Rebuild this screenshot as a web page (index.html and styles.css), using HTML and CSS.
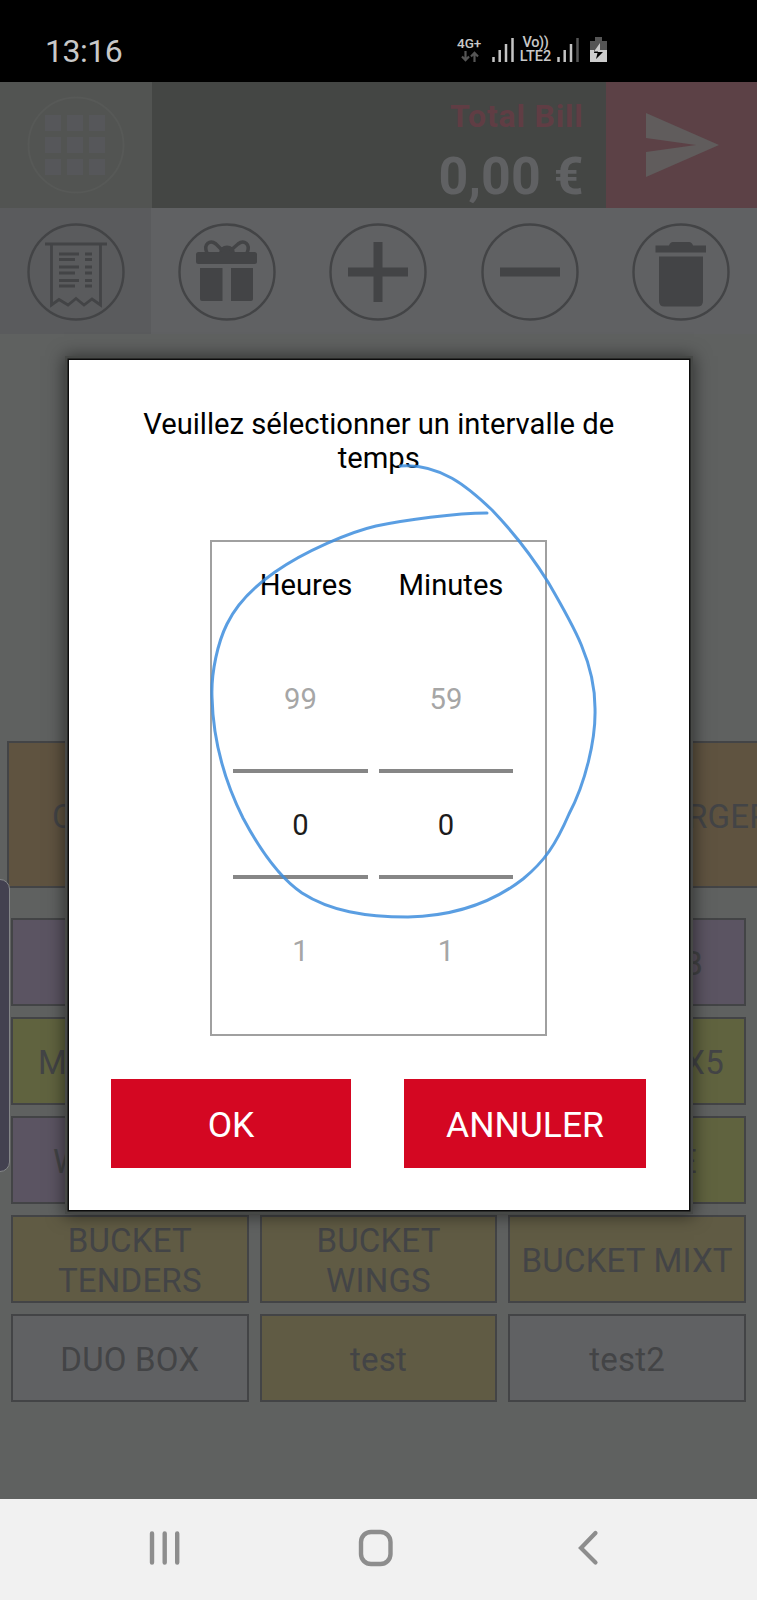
FILE: index.html
```html
<!DOCTYPE html>
<html lang="fr">
<head>
<meta charset="utf-8">
<title>Caisse</title>
<link rel="stylesheet" href="styles.css">
</head>
<body>
<div class="phone">
  <header class="status">
    <span class="clock">13:16</span>
    <div class="status-icons">
      <div class="net"><span>4G+</span>
        <svg width="18" height="11" viewBox="0 0 18 11"><path d="M4.500 0V9M1 5.500L4.500 9.200L8 5.500M13.500 11V2M10 5.500L13.500 1.800L17 5.500" fill="none" stroke="#555" stroke-width="2.200"/></svg>
      </div>
      <svg class="bars" width="23" height="26" viewBox="0 0 23 26"><path d="M1.500 20V25M7.700 13V25M14 7V25M20.500 1V25" stroke="#c4c4c4" stroke-width="2.500"/></svg>
      <div class="volte"><span class="vo">Vo))</span><span>LTE2</span></div>
      <svg class="bars bars-two" width="23" height="26" viewBox="0 0 23 26"><path d="M1.500 20V25M7.700 13V25M14 7V25" stroke="#c4c4c4" stroke-width="2.500"/><path d="M20.500 1V25" stroke="#555" stroke-width="2.500"/></svg>
      <svg class="battery" width="18" height="26" viewBox="0 0 18 26"><path d="M5 0H12V4H17V13H0V4H5Z" fill="#555"/><path d="M0 13H17V25H0Z" fill="#ccc"/><path d="M4.500 13H8V15H13L6 22L7.500 16H4Z" fill="#000"/><path d="M10 6L4 14.500H8.500L10 13H12L10 13Z" fill="#ccc"/></svg>
    </div>
  </header>

  <section class="bill">
    <div class="bill-apps">
      <svg width="98" height="98" viewBox="0 0 98 98"><circle cx="49" cy="49" r="47.500" fill="none" stroke="#575957" stroke-width="2"/><g fill="#56575a"><path d="M18 19h16v16H18zM40 19h16v16H40zM62 19h16v16H62zM18 41h16v16H18zM40 41h16v16H40zM62 41h16v16H62zM18 63h16v16H18zM40 63h16v16H40zM62 63h16v16H62z"/></g></svg>
    </div>
    <div class="bill-total"><span class="bill-label">Total Bill</span><span class="bill-amount">0,00 €</span></div>
    <div class="bill-send">
      <svg width="74" height="64" viewBox="0 0 74 64"><path d="M0 0L73 32L0 64V39L50 32L0 25Z" fill="#605c5c"/></svg>
    </div>
  </section>

  <nav class="tools">
    <div class="tool tool-active"><svg width="98" height="98" viewBox="0 0 98 98"><g fill="none" stroke="#434446"><circle cx="49" cy="49" r="47.500" stroke-width="2.400"/><path d="M18 21H80" stroke-width="3"/><path d="M24.500 21V82L32 76.500L41 82L49 75.500L57 82L65 76L73.500 82V21" stroke-width="2.800"/><path d="M32 31H52M58 31H65M32 36.500H48M58 36.500H65M32 44H52M58 44H65M32 50H48M58 50H65M32 57.500H52M58 57.500H65M32 63H48M58 63H65" stroke-width="3"/></g></svg></div>
    <div class="tool"><svg width="98" height="98" viewBox="0 0 98 98"><circle cx="49" cy="49" r="47.500" fill="none" stroke="#434446" stroke-width="2.400"/><g fill="#434446"><rect x="18" y="29" width="61" height="12" rx="2.500"/><path d="M22 45H44.500V78H24Q22 78 22 76ZM53 45H75V76Q75 78 73 78H53Z"/><path d="M41 30Q42 22.500 49 22.500Q56 22.500 57 30Z"/></g><path d="M29 30C25 21 32 16.500 38 21L45 28M69 30C73 21 66 16.500 60 21L52 28" fill="none" stroke="#434446" stroke-width="3.500"/></svg></div>
    <div class="tool"><svg width="98" height="98" viewBox="0 0 98 98"><circle cx="49" cy="49" r="47.500" fill="none" stroke="#434446" stroke-width="2.400"/><path d="M19 49H79M49 19V79" stroke="#434446" stroke-width="9"/></svg></div>
    <div class="tool"><svg width="98" height="98" viewBox="0 0 98 98"><circle cx="49" cy="49" r="47.500" fill="none" stroke="#434446" stroke-width="2.400"/><path d="M19 49H79" stroke="#434446" stroke-width="9"/></svg></div>
    <div class="tool"><svg width="98" height="98" viewBox="0 0 98 98"><circle cx="49" cy="49" r="47.500" fill="none" stroke="#434446" stroke-width="2.400"/><path d="M23.500 22.500H37Q38 19 41 19H57Q60 19 61 22.500H74V29.500H23.500ZM27 33.500H71V78Q71 83.500 65.500 83.500H32.500Q27 83.500 27 78Z" fill="#434446"/></svg></div>
  </nav>

  <main class="catalog">
    <div class="categories">
      <div class="item orange cat-left">C</div>
      <div class="item orange cat-right">RGER</div>
    </div>
    <div class="products">
      <div class="item purple"></div><div class="item purple"></div><div class="item purple tail-b">B</div>
      <div class="item lime head-m">M</div><div class="item lime"></div><div class="item lime tail-x">X5</div>
      <div class="item purple head-w">W</div><div class="item lime"></div><div class="item lime tail-e">E</div>
      <div class="item khaki">BUCKET<br>TENDERS</div><div class="item khaki">BUCKET<br>WINGS</div><div class="item khaki">BUCKET MIXT</div>
      <div class="item">DUO BOX</div><div class="item khaki">test</div><div class="item">test2</div>
    </div>
  </main>

  <footer class="navbar">
    <svg width="32" height="36" viewBox="0 0 32 36"><path d="M3 3.500V32.500M15.700 3.500V32.500M28.200 3.500V32.500" stroke="#8d8d8d" stroke-width="4.400" stroke-linecap="round"/></svg>
    <svg class="home" width="36" height="38" viewBox="0 0 36 38"><rect x="3" y="3" width="29.500" height="32" rx="10" fill="none" stroke="#8d8d8d" stroke-width="4.400"/></svg>
    <svg width="22" height="38" viewBox="0 0 22 38"><path d="M17.500 4L3 19L17.500 33.500" fill="none" stroke="#8d8d8d" stroke-width="4.200" stroke-linecap="round"/></svg>
  </footer>

  <div class="edge-handle"></div>

  <div class="dialog">
    <h1 class="dialog-title">Veuillez sélectionner un intervalle de temps</h1>
    <div class="picker">
      <div class="wheel"><span class="wheel-name wheel-hours">Heures</span><span class="near">99</span><span class="chosen">0</span><span class="near">1</span></div>
      <div class="wheel"><span class="wheel-name wheel-minutes">Minutes</span><span class="near">59</span><span class="chosen">0</span><span class="near">1</span></div>
    </div>
    <div class="actions"><button class="btn">OK</button><button class="btn btn-cancel">ANNULER</button></div>
  </div>

  <svg class="sketch" width="757" height="1600" viewBox="0 0 757 1600"><path d="M487 513C455 513 405 520 376 526C350 532 305 551 275 572C252 588 236 605 227 624C218 642 211 672 212 697C213 740 224 780 243 818C260 850 280 878 302 893C330 911 365 917 408 917C455 916 492 903 523 879C545 861 556 844 569 814C585 784 596 740 595 708C595 662 573 625 548 582C530 553 515 534 492 510C468 487 440 463 400 466" fill="none" stroke="#3d8ddd" stroke-opacity=".85" stroke-width="3" stroke-linecap="round"/></svg>
</div>
</body>
</html>
```
FILE: styles.css
```css
* { box-sizing: border-box; }
body { margin: 0; font-family: Roboto, "Liberation Sans", sans-serif; }
svg { display: block; flex: none; }
.phone { position: relative; width: 757px; height: 1600px; overflow: hidden; background: #5f6160; display: flex; flex-direction: column; }

.status { height: 82px; flex: none; background: #000; color: #c8c8c8; display: flex; align-items: flex-start; padding: 32px 0 0 45px; }
.clock { font-size: 32px; line-height: 38px; width: 410px; letter-spacing: -0.500px; }
.status-icons { display: flex; align-items: flex-start; padding-top: 5px; }
.net { width: 33px; font-size: 13.500px; font-weight: 500; line-height: 13px; display: flex; flex-direction: column; padding-left: 2px; }
.net svg { margin: 1px 0 0 4px; }
.bars { margin-left: 4px; }
.volte { margin-left: 4px; width: 33px; font-size: 14.500px; font-weight: 500; line-height: 13.500px; display: flex; flex-direction: column; align-items: center; margin-top: -1px; }
.vo { letter-spacing: -0.400px; }
.bars-two { margin-left: 5px; }
.battery { margin-left: 10px; }

.bill { height: 126px; flex: none; display: flex; }
.bill-apps { width: 151.500px; background: #525452; display: flex; justify-content: center; align-items: center; }
.bill-total { flex: 1; background: #444644; display: flex; flex-direction: column; align-items: flex-end; padding: 15px 22px 0 0; font-weight: 700; white-space: nowrap; }
.bill-label { color: #603d44; font-size: 32px; line-height: 38px; letter-spacing: 0.800px; }
.bill-amount { color: #606163; font-size: 52px; line-height: 60px; margin-top: 12px; }
.bill-send { width: 151.500px; background: #5c4146; display: flex; align-items: center; padding-left: 40px; }

.tools { height: 126px; flex: none; display: grid; grid-template-columns: repeat(5, 1fr); background: #606163; }
.tool { display: flex; justify-content: center; align-items: center; padding-top: 1px; }
.tool-active { background: #5a5b5d; }

.catalog { flex: 1; padding-top: 407px; color: #434446; }
.item { display: flex; align-items: center; justify-content: center; text-align: center; border: 2px solid #434446; background: #606163; font-size: 33px; line-height: 40px; letter-spacing: 0.200px; padding-top: 4px; white-space: nowrap; }
.categories { display: flex; justify-content: space-between; height: 147px; padding-left: 7px; }
.categories .item { width: 244px; flex: none; justify-content: flex-start; }
.categories .cat-left { padding-left: 43px; }
.categories .cat-right { width: 252px; margin-right: -14px; padding-left: 166px; }
.products { display: grid; grid-template-columns: repeat(3, 1fr); grid-auto-rows: 88px; gap: 11px; padding: 30px 11px 0; }
.orange { background: #5f5340; }
.purple { background: #5b5462; }
.lime { background: #60633f; }
.khaki { background: #605b44; }
.head-m { justify-content: flex-start; padding-left: 25px; }
.head-w { justify-content: flex-start; padding-left: 40px; }
.tail-b { justify-content: flex-end; padding-right: 41px; }
.tail-x { justify-content: flex-end; padding-right: 20px; }
.tail-e { justify-content: flex-end; padding-right: 47px; }

.navbar { height: 101px; flex: none; background: #f1f1f1; display: flex; justify-content: space-between; align-items: center; padding: 0 157px 4px 149px; }
.home { margin-right: 7px; }

.edge-handle { position: absolute; left: -10px; top: 879px; width: 20px; height: 293px; border: 1px solid #858789; border-radius: 10px; background: #434150; }

.dialog { position: absolute; left: 69px; top: 360px; width: 619.500px; height: 850px; background: #fff; color: #000; display: flex; flex-direction: column; align-items: center; padding-top: 47px; box-shadow: 0 0 0 1.500px #0c0c0c, 0 0 0 4px #464846, 0 1px 16px 5px rgba(0,0,0,.5); }
.dialog-title { margin: 0; width: 500px; height: 69px; text-align: center; font-size: 29.200px; font-weight: 400; line-height: 34px; }
.picker { width: 337px; height: 496px; margin-top: 64px; border: 2px solid #a0a0a0; display: flex; gap: 11px; padding: 25px 0 0 21px; }
.wheel { width: 134.500px; display: flex; flex-direction: column; align-items: center; font-size: 29.200px; line-height: 36px; }
.wheel-hours { padding-left: 11px; }
.wheel-minutes { padding-left: 10px; }
.near { color: #a6a6a6; margin-top: 78px; }
.chosen { color: #1c1c1c; align-self: stretch; text-align: center; height: 110px; line-height: 104px; margin-top: 52px; border-top: 4px solid #868686; border-bottom: 4px solid #868686; }
.chosen + .near { margin-top: 54px; }
.actions { align-self: stretch; display: flex; margin-top: 43px; padding-left: 42px; gap: 53px; }
.btn { width: 240px; height: 89px; padding: 2px 0 0; border: 0; border-radius: 0; background: #d40722; color: #fff; font-family: inherit; font-size: 35.500px; }
.btn-cancel { width: 242px; }

.sketch { position: absolute; left: 0; top: 0; pointer-events: none; }
```
